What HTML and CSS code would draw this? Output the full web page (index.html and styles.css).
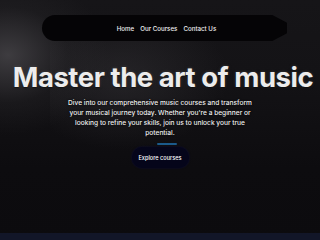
FILE: index.html
```html
<!DOCTYPE html>
<html>
<head>
<meta charset="utf-8">
<link rel="stylesheet" href="styles.css">
</head>
<body>
<div class="page">
  <div class="glow"></div>
  <header class="navwrap">
    <nav class="nav">
      <a href="#">Home</a>
      <a href="#">Our Courses</a>
      <a href="#">Contact Us</a>
    </nav>
  </header>
  <main class="hero">
    <h1 class="title">Master the art of music</h1>
    <p class="lead">Dive into our comprehensive music courses and transform your musical journey today. Whether you're a beginner or looking to refine your skills, join us to unlock your true potential.</p>
    <div class="cta-wrap">
      <span class="cta-line"></span>
      <a class="cta" href="#">Explore courses</a>
    </div>
  </main>
  <footer class="strip"></footer>
</div>
</body>
</html>
```
FILE: styles.css
```css
* { box-sizing: border-box; }
html, body { margin: 0; padding: 0; }
body {
  width: 320px;
  height: 240px;
  overflow: hidden;
  background: #0c0b0e;
  font-family: Inter, "Noto Sans", sans-serif;
  color: #fff;
}
.page {
  position: relative;
  width: 320px;
  height: 240px;
  display: flex;
  flex-direction: column;
  background:
    radial-gradient(ellipse 100px 80px at 8px 55px, rgba(72,70,74,0.8), rgba(40,39,42,0.35) 60%, rgba(0,0,0,0) 100%),
    linear-gradient(180deg, #161518 0%, #141316 30%, #0d0c0f 70%, #0c0b0e 100%);
}
.glow {
  position: absolute;
  left: 50px;
  top: 30px;
  width: 180px;
  height: 120px;
  background: radial-gradient(ellipse at 40% 40%, rgba(62,60,64,0.4), rgba(0,0,0,0) 70%);
  pointer-events: none;
}
.navwrap {
  position: relative;
  padding: 15px 33px 0 42px;
}
.nav {
  height: 26px;
  background: #050406;
  border-radius: 13px 0 0 13px;
  clip-path: polygon(0 0, 94% 0, 100% 30%, 100% 70%, 94% 100%, 0 100%);
  display: flex;
  align-items: center;
  justify-content: center;
  gap: 6px;
  padding-left: 4px;
}
.nav a {
  color: #f2f2f2;
  text-decoration: none;
  font-size: 6.2px;
  font-weight: 500;
}
.hero {
  position: relative;
  flex: 1;
  display: flex;
  flex-direction: column;
  align-items: center;
}
.title {
  margin: 19px 0 0;
  padding-left: 6px;
  font-size: 27.5px;
  font-weight: 700;
  line-height: 34px;
  letter-spacing: -0.45px;
  color: #ececec;
  text-shadow: 0 1px 2px rgba(0,0,0,0.8), 0 0 3px rgba(120,120,120,0.5);
  white-space: nowrap;
}
.lead {
  margin: 4px 0 0;
  width: 188px;
  text-align: center;
  font-size: 6.6px;
  line-height: 10px;
  color: #f0f0f0;
  font-weight: 500;
  text-shadow: 0 0 2px #000;
}
.cta-wrap {
  display: flex;
  flex-direction: column;
  align-items: center;
  margin-top: 5px;
}
.cta-line {
  width: 20px;
  height: 2px;
  background: #1b5a8a;
  border-radius: 1px;
  margin-left: 13px;
}
.cta {
  margin-top: 2px;
  width: 57px;
  height: 21px;
  border-radius: 10px;
  background: #05051a;
  box-shadow: 0 0 2px #0a0a3a;
  color: #fff;
  text-decoration: none;
  font-size: 5.6px;
  font-weight: 500;
  display: flex;
  align-items: center;
  justify-content: center;
}
.strip {
  height: 7px;
  background: #121628;
}
```
